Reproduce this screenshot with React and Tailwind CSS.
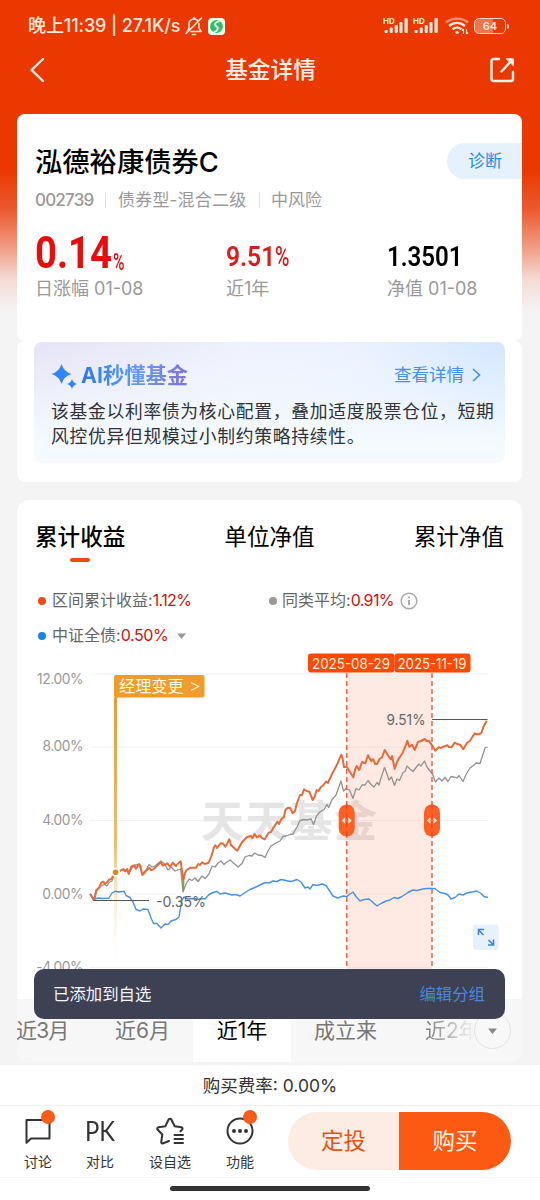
import React from 'react'

const FUND_LINE =
  '90,894 91.5,896 93.7,900 95,897 96,890.7 99.3,887.3 101.3,882.7 103.3,881.7 105,884 106.7,882.7 108.7,880 111.7,878.7 114,873.3 115.7,872 120,870.7 123.3,869.3 125,871.5 127.3,869 128.7,874 131.3,866.7 134,865.3 136,868.7 139,864 140.5,866 142.3,875 144,873.5 146,870.7 149.3,867.7 151,870.3 153.3,869.3 157.3,865.5 160.7,862 162.5,865.5 164,865.3 167.3,863.3 170,866.7 172.7,862.7 176,866 178,863.5 180.7,861.3 183.3,880.7 185,873 186.7,870 190.7,867.7 196,867.7 198.3,864 200,865 202,862.3 204.7,864 208.7,862.7 211,857 212.7,852 214,847 215.3,845.3 217,848 220.7,843.3 223,843.5 225.3,846.7 227.5,843 229.3,839.3 231,845 232.7,846.7 237.3,850.7 241.7,842.7 246.7,837.3 250.7,836 252.5,838 254.7,834 257,837.5 260,835.3 262,838 264.7,839.3 268.7,832.7 271,832 273.3,828 277.3,821.7 279,824 281.3,819.3 284,817 285.3,810 287.5,808 290,807.7 292.7,813.3 295,811 296.7,804 300,795 302,795 304,789.3 306.5,791 309.3,791.7 312.7,800 314.5,797 316.7,790 318.5,791 320.7,787.3 323,785.5 326,781.7 328,783 329.3,780 332.7,772.7 336.7,765.3 341.3,754.7 342.5,758 344,767 346.7,766.7 350,772 353.3,777.3 355,770 356.7,766 359.3,770 362,762 365.3,763.3 368,755.3 371.3,761.3 373,759 375.3,764 377,764 379.3,759.3 382,757.3 384.7,750 388,755.3 390.7,759.3 392,756 394.7,768.7 397,762 398.7,758.7 402.7,752.7 405.3,746.7 407.3,740.7 409.3,746.7 412,744.7 414.7,750 418,742 421,741 424.7,739 426.5,741 428.7,740.7 432,745.3 435.3,750.7 438.7,747.3 441,748 443.3,746.7 447.3,745.3 449,747 451.3,747.3 454.7,742.7 457,744 460,744.7 463.3,749.3 466.7,743.3 470,740.7 474.7,733.3 477,734.5 481.3,733.3 483.3,727.3 486.7,720.7'

const PEER_LINE =
  '90,894 94,899 97,890 101,886 104,884.5 107,886 109,882.5 112,881 115,873 120,871 124,869 127,871 129,873 132,868 135,865 139,864.5 142.3,874 146,870 149,864.5 152,867 155,866 158,863.5 161,861 165,864.5 168,870 171,867 175,871 180.7,869 183,892 186,884 189,879 192,880.5 195,878 198,881.5 202,876 205,878.5 209,874 212,866 215,867 218,863 221,861 224,864.5 227,862 230,860 234,863.5 238,867 242,863.5 245,857 249,855.5 252,856 254.5,853 258,855 262,855.5 265,857.5 268,851 271,846 276,843 280,841 283,836.5 286,836 290,834.5 293,834 297,827 300,820.5 304,819.5 307,820 311,819 313.5,824.5 317,815 320,812 324,809.5 327,804.5 328.7,807.5 332,799.5 336,795 341,781 343.5,791 346,788.5 349.5,790 353,798.5 356,788.5 359,790 362,785 365,785 368,780.5 371,784.5 374,787 377,782.5 379,785 381,778 384.5,767.5 387,774 389,780 391.5,777 394.5,785.5 397,779 399.5,780.5 403,772.5 405,771.5 407,766 410,769 413,771.5 416,767.5 419,764 421,766 424.5,761 427,767 430,771 432.5,774 435.5,782 439,778 442,781 445,777.5 448,781.5 451,776.5 454,777 457,778 459,775.5 463,781.5 466,774.5 470,768 474,765 476,763 480,763.5 482,757.5 485,748 487.5,747'

const INDEX_LINE =
  '90,894 93.7,899.5 98,898 104,898.5 109,898 112,893 115,891.3 119,892 124,891.3 126,895.5 130,897.5 133,902 136,909.5 140,911 143,909 148,909.5 151,918 153.5,923.5 157,923.5 161,928 165,924 168,924.5 171,921 176,919.5 179,917 180.5,908 182,900 184,897 188,899 194,898.5 198,899.5 202,898.5 205,899 209,894.5 213,892.5 217,891.5 220,894 225,893 232,895 236,894.5 240,896 245,892.5 250,889.5 255,887.5 260,885 265,882.5 269,883 273,881 277,881.5 281,879.5 286,880.5 290,881.5 293,881 297,879.5 301,882 305,888 308,887 310,889 313,884.5 317,885.5 322,884 326,885.5 329,890 331,893 333,896 338,898 343,896 347,896.5 350,894 353,892 356,896.5 360,901 364,899.5 369,899 373,902.5 377,906 381,903.5 386,901 390,900 394,897.5 398,898.5 402,896.5 408,892.5 413,890 417,890.5 423,889 427,888.5 435,888.5 440,892.5 445,893.5 448,895 451,899 455,897.5 459,894 463,895 467,893 472,892 477,891 481,893.5 484,896.5 488,897.5'

const AXIS = [
  { label: '12.00%', y: 674, ty: 684 },
  { label: '8.00%', y: 747, ty: 751 },
  { label: '4.00%', y: 820.5, ty: 825 },
  { label: '0.00%', y: 894, ty: 899 },
  { label: '-4.00%', y: 967.5, ty: 972 },
]

const Signal = () => (
  <svg width="26" height="18" viewBox="0 0 26 18" fill="#ffe9df">
    <text x="0" y="6.5" fontSize="8" fontWeight="700">HD</text>
    <rect x="1.5" y="13" width="3.2" height="3" rx="1" />
    <rect x="6.7" y="10.5" width="3" height="5.5" rx="1" />
    <rect x="11.7" y="8" width="3" height="8" rx="1" />
    <rect x="16.5" y="5" width="3" height="11" rx="1" />
    <rect x="21.5" y="1" width="3.2" height="15" rx="1" />
  </svg>
)

const StatusBar = () => (
  <div className="flex h-[52px] items-center pl-7 pr-[31px] text-[#ffe9df]">
    <span className="text-[18px] font-medium leading-none tracking-[-0.1px] whitespace-nowrap">晚上11:39 | 27.1K/s</span>
    <svg className="ml-1" width="20" height="20" viewBox="0 0 20 20" fill="none" stroke="currentColor" strokeWidth="1.6" strokeLinecap="round" strokeLinejoin="round">
      <path d="M5 12V8a5 5 0 0 1 8.500-3.600M15 7.500V12l2 3.500H7M5 12.500 3.200 15.500M17.500 2 2 17.500M10 1.500v1" />
      <path d="M8.500 18.500h3" />
    </svg>
    <svg className="ml-1" width="17" height="17" viewBox="0 0 17 17">
      <rect width="17" height="17" rx="4" fill="#f4fff4" />
      <circle cx="8.5" cy="8.5" r="6.5" fill="#34bd63" />
      <path d="M11.5 3.2C7 4 6 6.500 8.500 8.500s1 4.500-2.700 5.600" fill="none" stroke="#fff" strokeWidth="1.8" />
    </svg>
    <div className="ml-auto flex items-center">
      <Signal />
      <span className="w-1" />
      <Signal />
      <svg className="ml-1.5" width="24" height="18" viewBox="0 0 24 18" fill="none" stroke="currentColor" strokeWidth="2.4">
        <path d="M1 5.500C7 .3 17 .3 23 5.500" opacity=".5" />
        <path d="M4 9c4.600-4.200 11.400-4.200 16 0M7.500 12.300c2.600-2.300 6.400-2.300 9 0" />
        <circle cx="12" cy="15.3" r="1.6" fill="currentColor" stroke="none" />
        <path d="M18.500 12v5m0-5-1.500 1.500M21.500 17v-5m0 5 1.500-1.500" strokeWidth="1.1" />
      </svg>
      <div className="ml-[5px] flex h-4 w-8 items-center justify-center rounded-[5px] border-[1.5px] border-[#ffd5c5] bg-gradient-to-r from-white/30 from-60% to-transparent to-60%">
        <span className="text-[11px] font-semibold leading-none">64</span>
      </div>
      <span className="ml-px h-[5px] w-[2px] rounded-r bg-[#ffd5c5]" />
    </div>
  </div>
)

const NavBar = () => (
  <div className="flex h-[62px] items-start justify-between pl-[29px] pr-[25px] pt-[5px] text-[#fff3ec]">
    <svg width="16" height="26" viewBox="0 0 16 26" fill="none" stroke="currentColor" strokeWidth="2.4" strokeLinecap="round" strokeLinejoin="round">
      <path d="M14 2 2.500 13 14 24" />
    </svg>
    <h1 className="pl-1.5 text-[22.7px] font-medium leading-[26px]">基金详情</h1>
    <svg width="25" height="26" viewBox="0 0 25 26" fill="none" stroke="currentColor" strokeWidth="2.4" strokeLinecap="round" strokeLinejoin="round">
      <path d="M9 2H3.500A2 2 0 0 0 1.500 4v18a2 2 0 0 0 2 2H21a2 2 0 0 0 2-2v-7" />
      <path d="M11.500 14.500 22 3" />
      <path d="M16.500 1.800h6.800v6.500z" fill="currentColor" strokeWidth="1" />
    </svg>
  </div>
)

const Summary = () => (
  <section className="h-[227px] rounded-[8px] bg-white pl-[18px]">
    <div className="flex items-center justify-between pt-[29px]">
      <h2 className="translate-y-[2px] text-[27.3px] font-medium leading-9 text-black">泓德裕康债券C</h2>
      <div className="flex h-9 w-[75px] items-center rounded-l-full bg-[#e5f2fd] pl-[21px] pt-0.5 text-[17px] text-[#258de8]">诊断</div>
    </div>
    <div className="mt-[11px] flex h-5 items-center text-[17px] leading-5 text-[#999]">
      <span className="w-[61px] font-medium tracking-[-0.8px]">002739</span>
      <span className="ml-[9px] h-4 w-px bg-[#e4e4e4]" />
      <span className="ml-3 w-[129px] tracking-[0.2px] whitespace-nowrap">债券型-混合二级</span>
      <span className="ml-3 h-4 w-px bg-[#e4e4e4]" />
      <span className="ml-[11px]">中风险</span>
    </div>
    <div className="mt-[18px] flex">
      <div className="w-[191px]">
        <div className="flex h-[46px] items-end font-[Roboto] text-[#e80c0c]">
          <span className="mb-[-4px] w-[78px] origin-left scale-x-[0.85] text-[45px] font-bold leading-[50px]">0.14</span>
          <span className="mb-[-6px] origin-left scale-x-[0.65] text-[24px] font-medium leading-9">%</span>
        </div>
        <div className="mt-[3px] text-[18px] leading-6 text-[#999]">日涨幅 01-08</div>
      </div>
      <div className="w-[161px]">
        <div className="flex h-[46px] items-end font-[Roboto] text-[#dc1c1c]">
          <span className="mb-[-1px] w-[49px] origin-left scale-x-[0.88] text-[28px] font-semibold leading-[37px]">9.51</span>
          <span className="mb-[-1px] origin-left scale-x-[0.7] text-[28px] font-medium leading-[37px]">%</span>
        </div>
        <div className="mt-[3px] text-[18px] leading-6 text-[#999]">近1年</div>
      </div>
      <div>
        <div className="flex h-[46px] items-end font-[Roboto] text-black">
          <span className="mb-[-1px] origin-left scale-x-[0.86] text-[28px] font-semibold leading-[37px]">1.3501</span>
        </div>
        <div className="mt-[3px] text-[18px] leading-6 text-[#999]">净值 01-08</div>
      </div>
    </div>
  </section>
)

const AiCard = () => (
  <section className="h-[141px] rounded-[8px] bg-white px-[17px] pt-px">
    <div className="h-[121px] rounded-[8px] bg-[linear-gradient(to_bottom,transparent_0%,#f5faff_85%),linear-gradient(105deg,#e5e3f5_0%,#eff1fd_42%,#eaf2ff_65%,#cfe3ff_100%)] px-[17px] pt-[19px]">
      <div className="flex h-7 items-center">
        <svg className="translate-y-px" width="27" height="28" viewBox="0 0 27 28" fill="#3285f4">
          <path d="M10.500 2q2.300 7.700 10 10-7.700 2.300-10 10Q8.200 14.300.5 12q7.700-2.300 10-10z" />
          <path d="M21 17q1.200 3.800 5 5-3.800 1.200-5 5-1.200-3.800-5-5 3.800-1.200 5-5z" />
        </svg>
        <h3 className="ml-[3px] bg-gradient-to-r from-[#2678ec] via-[#5b9df2] to-[#8071db] bg-clip-text text-[21.3px] font-bold leading-7 text-transparent">AI秒懂基金</h3>
        <span className="ml-auto text-[17.5px] text-[#4390ee]">查看详情</span>
        <svg className="ml-2 mr-[7px]" width="9" height="14" viewBox="0 0 9 14" fill="none" stroke="#4390ee" strokeWidth="1.7">
          <path d="m1 1 6.500 6L1 13" />
        </svg>
      </div>
      <p className="mt-2.5 text-[17.8px] leading-[25px] tracking-[0.7px] whitespace-nowrap text-[#303238]">
        该基金以利率债为核心配置，叠加适度股票仓位，短期
        <br />
        风控优异但规模过小制约策略持续性。
      </p>
    </div>
  </section>
)

const Legend = () => (
  <div className="pl-[21px] text-[16px] leading-[35px] text-[#666]">
    <div className="flex h-[35px] items-center">
      <span className="mr-1.5 h-2 w-2 rounded-full bg-[#ed4a14]" />
      <span>区间累计收益:</span>
      <span className="tracking-[-0.6px] text-[#ca1212]">1.12%</span>
      <div className="absolute left-[252px] flex items-center">
        <span className="mr-[5px] h-2 w-2 rounded-full bg-[#999]" />
        <span>同类平均:</span>
        <span className="tracking-[-0.6px] text-[#ca1212]">0.91%</span>
        <svg className="ml-1.5" width="18" height="18" viewBox="0 0 18 18" fill="none" stroke="#aaa" strokeWidth="1.5">
          <circle cx="9" cy="9" r="7.8" />
          <path d="M9 8v5M9 4.500v1.800" strokeWidth="2" />
        </svg>
      </div>
    </div>
    <div className="flex h-[35px] items-center">
      <span className="mr-1.5 h-2 w-2 rounded-full bg-[#1683ea]" />
      <span>中证全债:</span>
      <span className="tracking-[-0.4px] text-[#ca1212]">0.50%</span>
      <svg className="ml-[9px]" width="9" height="6" viewBox="0 0 9 6" fill="#999"><path d="M0 .5h9L4.500 6z" /></svg>
    </div>
  </div>
)

const Handle = ({ x }) => (
  <g>
    <rect x={x - 8} y="804.5" width="16" height="32" rx="8" fill="#fd5f24" />
    <path d={`M${x} 804.5v32`} stroke="#e34b22" strokeWidth="1.5" strokeDasharray="5 4" />
    <path d={`M${x - 1.5} 817v7l-3.5-3.5zM${x + 1.5} 817v7l3.5-3.5z`} fill="#ffe0cc" />
  </g>
)

const Chart = () => (
  <svg className="block" width="505" height="347" viewBox="17 652 505 347">
    <defs>
      <linearGradient id="flagPole" x1="0" y1="0" x2="0" y2="1">
        <stop offset="0" stopColor="#e89c31" />
        <stop offset=".55" stopColor="#f3bd70" />
        <stop offset="1" stopColor="#fff" stopOpacity="0" />
      </linearGradient>
    </defs>
    {AXIS.map((a) => (
      <g key={a.label}>
        <path d={`M90 ${a.y}H488`} stroke="#f3f3f3" />
        <text x="83" y={a.ty} textAnchor="end" fontSize="13.8" letterSpacing="-0.45" fill="#999">{a.label}</text>
      </g>
    ))}
    <text x="201" y="837" fontSize="43" fontWeight="700" letterSpacing="1.3" fill="#e5e5e5">天天基金</text>
    <rect x="346.7" y="674" width="85.3" height="325" fill="#ff4d1c" fillOpacity=".12" />
    <rect x="114" y="697" width="3" height="270" fill="url(#flagPole)" />
    <g fill="none" strokeLinejoin="round">
      <polyline points={INDEX_LINE} stroke="#4b91e2" strokeWidth="1.4" />
      <polyline points={PEER_LINE} stroke="#929292" strokeWidth="1.3" />
      <polyline points={FUND_LINE} stroke="#e66b3a" strokeWidth="2" />
      <path d="M183.300 881v8" stroke="#72a84c" strokeWidth="2" />
    </g>
    <circle cx="115.6" cy="872.3" r="4.5" fill="#fff" />
    <circle cx="115.6" cy="872.3" r="2.8" fill="#d48a17" />
    <path d="M93.500 900.500H149M432 719.500H487.500" stroke="#555" strokeWidth="1.2" />
    <g fontSize="15" fill="#666">
      <text x="156" y="906.5" textLength="50" lengthAdjust="spacingAndGlyphs">-0.35%</text>
      <text x="386.5" y="725" textLength="39" lengthAdjust="spacingAndGlyphs">9.51%</text>
    </g>
    <path d="M346.700 673V999M432 673V999" stroke="#e5694e" strokeWidth="1.5" strokeDasharray="5 3" />
    <Handle x={346.7} />
    <Handle x={432} />
    <g fill="#ff4800">
      <rect x="308" y="653.5" width="86.5" height="19" rx="3" />
      <rect x="394.5" y="653.5" width="76" height="19" rx="3" />
    </g>
    <g fontSize="14" fill="#fff1df">
      <text x="312" y="668.5" textLength="78" lengthAdjust="spacingAndGlyphs">2025-08-29</text>
      <text x="397.5" y="668.5" textLength="69" lengthAdjust="spacingAndGlyphs">2025-11-19</text>
    </g>
    <rect x="114" y="675" width="90.5" height="22.5" rx="2" fill="#f09b2a" />
    <text x="119" y="692" fontSize="16.2" fill="#fffbe6">经理变更</text>
    <path d="m191 682.500 7.500 4-7.500 4" fill="none" stroke="#fff4cf" strokeWidth="1.4" />
    <rect x="473" y="924.5" width="25.5" height="25.5" rx="3" fill="#e7f1fc" />
    <path d="m483.500 935-5-5m0 5v-5.500h5.500M488.500 940l5 5m0-5.500v5.500H488" fill="none" stroke="#3e84d6" strokeWidth="1.6" />
  </svg>
)

const PeriodTabs = () => (
  <div className="relative flex h-[63px] overflow-hidden rounded-b-[12px] bg-[#f7f7f7] text-[21px] leading-[63px] text-[#777]">
    <span className="ml-[-1px] w-[51px] tracking-[-0.8px] whitespace-nowrap">近3月</span>
    <span className="ml-[48px] w-[78px] whitespace-nowrap">近6月</span>
    <span className="w-[98px] bg-white text-center text-black">近1年</span>
    <span className="ml-[23px] w-[111px]">成立来</span>
    <span className="whitespace-nowrap bg-gradient-to-r from-[#777] to-transparent to-90% bg-clip-text text-transparent">近2年</span>
    <span className="absolute right-[11px] top-[13px] flex h-[37px] w-[37px] items-center justify-center rounded-full border border-[#e2e2e2] bg-[#f8f8f8]">
      <svg width="9" height="6" viewBox="0 0 9 6" fill="#888"><path d="M0 .5h9L4.500 6z" /></svg>
    </span>
  </div>
)

const Performance = () => (
  <section className="relative mt-[18px] h-[562px] rounded-[12px] bg-white">
    <div className="flex h-[62px] justify-between px-[18px] pt-[19px] text-[22.6px] leading-9 text-black">
      <div className="relative font-medium">
        累计收益
        <span className="absolute left-[35px] top-[39px] h-1 w-5 rounded-full bg-[#ed4a14]" />
      </div>
      <div>单位净值</div>
      <div>累计净值</div>
    </div>
    <div className="h-[90px] pt-[21px]">
      <Legend />
    </div>
    <Chart />
    <PeriodTabs />
  </section>
)

const Action = ({ label, dot, className, children }) => (
  <div className={`relative flex flex-col items-center pt-[9px] text-[14px] leading-5 text-[#333] ${className}`}>
    <div className="flex h-8 items-center justify-center">{children}</div>
    <span className="mt-[5px]">{label}</span>
    {dot && <span className="absolute left-1/2 top-1 ml-[3px] h-[14px] w-[14px] rounded-full bg-[#f85c18]" />}
  </div>
)

const BottomBar = () => (
  <div className="flex h-[72px] border-t border-[#f0f0f0] pl-2">
    <Action label="讨论" dot className="w-[60px]">
      <svg width="26" height="26" viewBox="0 0 26 26" fill="none" stroke="#333" strokeWidth="2" strokeLinejoin="round">
        <path d="M1.500 2h23v18.500H6l-4.500 4.300z" />
      </svg>
    </Action>
    <Action label="对比" className="w-[64px]">
      <span className="origin-center scale-x-[0.88] text-[27px] leading-8 font-[Lato]">PK</span>
    </Action>
    <Action label="设自选" className="w-[76px]">
      <svg width="28" height="28" viewBox="0 0 28 28" fill="none" stroke="#333" strokeWidth="2" strokeLinejoin="round" strokeLinecap="round">
        <path d="M13 24 6.500 26.500Q5 26.500 5.300 24.500L6.300 17.500 1.500 12.500Q.7 11 2.500 10.300L9.300 9.200 12.500 2.700Q14 .7 15.500 2.700L18.700 9.200 25.500 10.300Q27.300 11 26 12.700L24.500 14.300" />
        <path d="M18.500 18H27M18.500 22H27M18.500 26H27" />
      </svg>
    </Action>
    <Action label="功能" dot className="w-[64px]">
      <svg width="28" height="28" viewBox="0 0 28 28" fill="none" stroke="#333" strokeWidth="2">
        <circle cx="14" cy="14" r="12.5" />
        <g fill="#333" stroke="none">
          <circle cx="8" cy="14" r="2" />
          <circle cx="14" cy="14" r="2" />
          <circle cx="20" cy="14" r="2" />
        </g>
      </svg>
    </Action>
    <div className="ml-4 mt-1.5 flex h-[58px] w-[223px] overflow-hidden rounded-full text-[22.5px]">
      <div className="flex w-[111px] items-center justify-center bg-[#fdece4] text-[#e35514]">定投</div>
      <div className="flex flex-1 items-center justify-center bg-[#fc5a12] text-[#fff3e4]">购买</div>
    </div>
  </div>
)

const Toast = () => (
  <div className="absolute left-[34px] top-[969px] flex h-[50px] w-[471px] items-center justify-between rounded-[10px] bg-[#3e4053] pl-[19px] pr-5 text-[16.4px]">
    <span className="text-[#f5f5fa]">已添加到自选</span>
    <span className="text-[#4689dc]">编辑分组</span>
  </div>
)

export default function App() {
  return (
    <div className="relative flex h-[1200px] w-[540px] flex-col overflow-hidden bg-[#f4f4f4] bg-[linear-gradient(to_bottom,#ea3800_0px,#ea3800_170px,#ec5a30_210px,#f1a18a_250px,#f4dcd5_280px,#f4f4f4_312px)] font-[Inter,'Noto_Sans_CJK_SC',sans-serif]">
      <StatusBar />
      <NavBar />
      <main className="h-[951px] pl-[17px] pr-[18px]">
        <Summary />
        <AiCard />
        <Performance />
      </main>
      <div className="bg-white">
        <div className="h-[40px] text-center text-[17.5px] leading-[41px] text-[#333]">购买费率: 0.00%</div>
        <BottomBar />
        <div className="h-[23px] border-t border-[#f5f5f5] pt-2">
          <div className="mx-auto h-[5px] w-[200px] rounded-full bg-[#333]" />
        </div>
      </div>
      <Toast />
    </div>
  )
}
